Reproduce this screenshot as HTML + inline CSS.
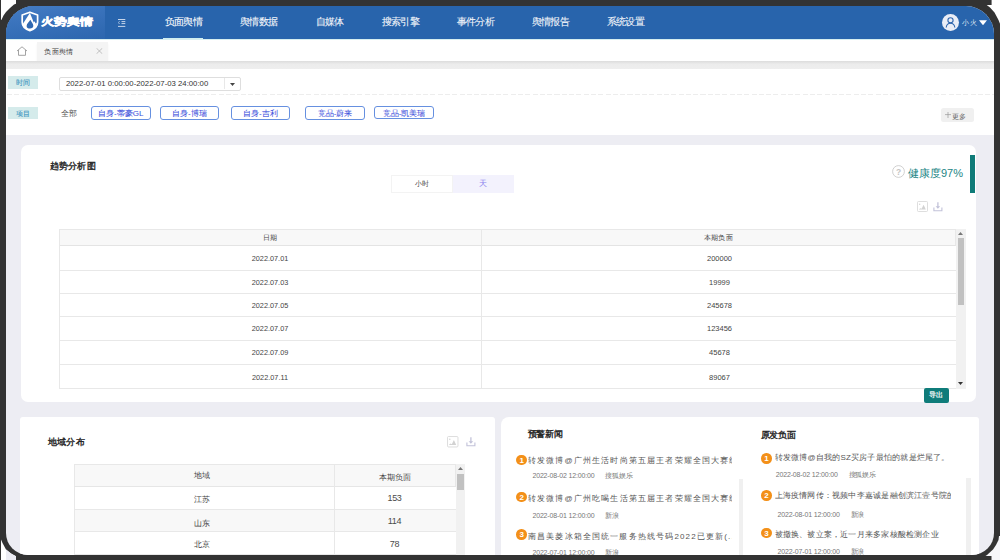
<!DOCTYPE html>
<html><head><meta charset="utf-8">
<style>
*{box-sizing:border-box;margin:0;padding:0}
html,body{width:1000px;height:560px;overflow:hidden;background:#333}
body{position:relative;font-family:"Liberation Sans",sans-serif;color:#333}
.a{position:absolute;white-space:nowrap}
#app{position:absolute;left:6px;top:6px;width:988px;height:549px;border-radius:28px 28px 22px 22px;overflow:hidden;background:#ededf3}
#w{position:absolute;left:-6px;top:-6px;width:1000px;height:560px}
#hdr{position:absolute;left:0;top:0;width:1000px;height:39px;background:#2864ac}
#logo{position:absolute;left:0;top:0;width:105px;height:39px;background:linear-gradient(170deg,#4a81c7 0%,#3a73bc 45%,#2c66ae 100%)}
.nav{position:absolute;top:15.5px;font-size:10px;line-height:12px;letter-spacing:-0.65px;color:#f2f5fa;-webkit-text-stroke:0.1px #f2f5fa}
#tabs{position:absolute;left:0;top:39px;width:1000px;height:22px;background:#fff;border-top:1px solid #d6eef0}
#band{position:absolute;left:0;top:61px;width:1000px;height:8px;background:linear-gradient(#dcdcdc,#ececec 40%,#eeeeee)}
#fpanel{position:absolute;left:0;top:69px;width:1000px;height:66px;background:#fff}
.card{position:absolute;background:#fff}
.lbl{position:absolute;left:7.5px;width:30.5px;height:12.5px;background:#d5ebeb;color:#3b95c0;font-size:7px;line-height:13px;text-align:center;letter-spacing:0.2px;-webkit-text-stroke:0.1px #3b95c0}
.chip{position:absolute;top:106px;height:13.5px;border:1px solid #6690e0;border-radius:3px;color:#3d4fdc;font-size:8px;line-height:14px;text-align:center;-webkit-text-stroke:0.05px #3d4fdc}
.tbl{position:absolute;border:1px solid #e6e6e6;background:#fff}
.row{position:absolute;left:0;border-bottom:1px solid #e6e6e6}
.cell{position:absolute;top:0;text-align:center;font-size:7.5px;color:#333}
.ttl{font-size:9px;font-weight:normal;color:#222;line-height:12px;letter-spacing:0.3px;-webkit-text-stroke:0.35px #222}
.num{position:absolute;width:10.5px;height:10.5px;border-radius:50%;background:#f39019;color:#fff;font-size:8px;line-height:11px;text-align:center;font-weight:bold}
.nt{font-size:9px;color:#555;letter-spacing:0.15px;line-height:11px;overflow:hidden}
.meta{font-size:7px;color:#777;line-height:8px;letter-spacing:-0.15px}
</style></head><body>
<div id="app"><div id="w">
  <div id="hdr">
    <div id="logo"></div>
    <svg class="a" style="left:18.5px;top:10.3px" width="22" height="23" viewBox="0 0 22 23">
      <path d="M10.9 2.2 L18.6 5 L18.6 12.2 C18.6 16.3 15.2 19.2 10.9 20.6 C6.6 19.2 3.2 16.3 3.2 12.2 L3.2 5 Z" fill="none" stroke="#fff" stroke-width="1.7" stroke-linejoin="round"/>
      <path d="M10.9 3 L3.6 14.2 L3.9 16 L6.3 18.6 L10.9 20.2 L15.5 18.6 L17.6 16.2 L17.9 12.6 L16.6 13.6 L15.6 11.2 L14.8 12.4 Z" fill="#fff"/>
      <path d="M11.3 9.8 C12.3 11.8 14.3 13.6 14.3 15.8 C14.3 17.5 13 18.6 11 18.6 C9 18.6 7.6 17.6 7.6 15.9 C7.6 13.6 10.3 12 11.3 9.8 Z" fill="#3069b2"/>
    </svg>
    <div class="a" style="left:40.5px;top:16.3px;font-size:9.8px;line-height:11px;font-weight:bold;-webkit-text-stroke:0.6px #fff;color:#fff;transform:scaleX(1.3);transform-origin:0 0">火势舆情</div>
    <svg class="a" style="left:118px;top:19px" width="8" height="8" viewBox="0 0 8 8"><path d="M0 0.5H7.3M3.5 2.6H7.3M3.5 4.6H7.3M0 7.4H7.3" stroke="#e3eaf5" stroke-width="0.85" fill="none"/><path d="M1.6 2.2L0.3 3.6L1.6 5" stroke="#e3eaf5" stroke-width="0.7" fill="none"/></svg>
    <div class="nav" style="left:164.5px;color:#fff">负面舆情</div>
    <div class="a" style="left:163px;top:37.5px;width:40px;height:1.5px;background:#cfeef0"></div>
    <div class="nav" style="left:240px">舆情数据</div>
    <div class="nav" style="left:315.5px">自媒体</div>
    <div class="nav" style="left:381.5px">搜索引擎</div>
    <div class="nav" style="left:456.5px">事件分析</div>
    <div class="nav" style="left:531.5px">舆情报告</div>
    <div class="nav" style="left:606.5px">系统设置</div>
    <div class="a" style="left:941.5px;top:14px;width:17px;height:17px;border-radius:50%;background:#e9edf6"></div>
    <svg class="a" style="left:941.5px;top:14px" width="17" height="17" viewBox="0 0 17 17"><circle cx="8.5" cy="6.3" r="2.6" fill="none" stroke="#2f66ad" stroke-width="1.1"/><path d="M4.2 13.5 C4.5 10.5 6.3 9.3 8.5 9.3 C10.7 9.3 12.5 10.5 12.8 13.5" fill="none" stroke="#2f66ad" stroke-width="1.1"/></svg>
    <div class="a" style="left:962.3px;top:18px;font-size:7px;line-height:9px;letter-spacing:0.5px;color:#dfe6f2">小火</div>
    <svg class="a" style="left:979px;top:20px" width="8" height="6" viewBox="0 0 8 6"><path d="M0 0.3H8L4 5.3Z" fill="#fff"/></svg>
  </div>
  <div id="tabs">
    <svg class="a" style="left:15.5px;top:6px" width="12" height="10" viewBox="0 0 12 10"><path d="M1 5 L6 0.8 L11 5 M2.5 4 V9.3 H9.5 V4" fill="none" stroke="#999" stroke-width="0.9"/></svg>
    <div class="a" style="left:37px;top:1.5px;width:71px;height:20.5px;background:#f4f4f4;box-shadow:0 1.5px 2px rgba(0,0,0,0.06)"></div>
    <div class="a" style="left:44.2px;top:6.5px;font-size:7px;line-height:10px;letter-spacing:0.4px;color:#444">负面舆情</div>
    <svg class="a" style="left:96px;top:8px" width="7" height="6" viewBox="0 0 7 6"><path d="M0.5 0.2L6.3 5.8M6.3 0.2L0.5 5.8" stroke="#aaa" stroke-width="0.7"/></svg>
  </div>
  <div id="band"></div>
  <div id="fpanel"></div>
  <div class="lbl" style="top:76px">时间</div>
  <div class="a" style="left:59px;top:76.5px;width:182px;height:14px;border:1px solid #dedede;border-radius:2px;background:#fff"></div>
  <div class="a" style="left:66px;top:79px;font-size:7.75px;line-height:9px;color:#333">2022-07-01 0:00:00-2022-07-03 24:00:00</div>
  <div class="a" style="left:223.5px;top:78px;width:1px;height:11px;background:#e8e8e8"></div>
  <svg class="a" style="left:229.5px;top:82.5px" width="5" height="3" viewBox="0 0 5 3"><path d="M0 0H5L2.5 3Z" fill="#444"/></svg>
  <div class="a" style="left:7px;top:93.5px;width:987px;height:1px;background:repeating-linear-gradient(90deg,#ededed 0 5px,transparent 5px 7.3px)"></div>
  <div class="lbl" style="top:106.8px">项目</div>
  <div class="a" style="left:61px;top:108.5px;font-size:8px;line-height:10px;color:#555">全部</div>
  <div class="chip" style="left:91px;width:59.5px">自身-蒂豪GL</div>
  <div class="chip" style="left:159.5px;width:59.5px">自身-博瑞</div>
  <div class="chip" style="left:230.5px;width:59.5px">自身-吉利</div>
  <div class="chip" style="left:305px;width:60px">竞品-蔚来</div>
  <div class="chip" style="left:374px;top:105.5px;width:60px">竞品-凯美瑞</div>
  <div class="a" style="left:941px;top:108px;width:33px;height:14px;border-radius:2.5px;background:#f0f0f0"></div><svg class="a" style="left:944.5px;top:112px" width="6" height="6" viewBox="0 0 6 6"><path d="M3 0V6M0 2.6H6" stroke="#999" stroke-width="0.7"/></svg><div class="a" style="left:951.5px;top:111.5px;font-size:7px;line-height:9px;color:#666">更多</div>

  <!-- trend card -->
  <div class="card" style="left:21px;top:145px;width:955px;height:257px;border-radius:7px"></div>
  <div class="a ttl" style="left:49.5px;top:159.6px">趋势分析图</div>
  <div class="a" style="left:391px;top:175px;width:61.5px;height:17.5px;border:1px solid #f3f3f3;background:#fff;font-size:7px;line-height:16px;text-align:center;color:#444">小时</div>
  <div class="a" style="left:452.5px;top:175px;width:61px;height:17.5px;background:#f3f2fd;font-size:8px;line-height:17px;text-align:center;color:#8b84ee">天</div>
  <svg class="a" style="left:891.5px;top:165px" width="13" height="13" viewBox="0 0 13 13"><circle cx="6.5" cy="6.5" r="5.9" fill="none" stroke="#c4c4c4" stroke-width="0.8"/><text x="6.5" y="9.6" font-size="8.5" font-weight="bold" text-anchor="middle" fill="#c4c4c4" font-family="Liberation Sans">?</text></svg>
  <div class="a" style="left:908px;top:165.8px;font-size:11px;line-height:15px;color:#1b8585">健康度97%</div>
  <div class="a" style="left:970px;top:155px;width:5px;height:38px;background:#0f7b78"></div>
  <svg class="a" style="left:917px;top:201px" width="11" height="11" viewBox="0 0 11 11"><rect x="0.5" y="0.5" width="10" height="10" rx="1" fill="#fff" stroke="#d6d6d6" stroke-width="0.8"/><path d="M1.8 8.6 L3.2 7.2 L4.6 7.8 L6.6 3.8 L8.8 8.6Z" fill="#d2d2d2"/><circle cx="2.7" cy="3.2" r="0.7" fill="#d2d2d2"/></svg>
  <svg class="a" style="left:932.5px;top:202.3px" width="10" height="10" viewBox="0 0 10 10"><path d="M4.9 0.3V5" stroke="#c2c2d9" stroke-width="1.3"/><path d="M2.6 4.3H7.2L4.9 6.8Z" fill="#c2c2d9"/><path d="M0.9 5.5V8.7H8.9V5.5" fill="none" stroke="#c2c2d9" stroke-width="1.1"/></svg>

  <div class="a" style="left:59px;top:229px;width:907px;height:160px;overflow:hidden;background:#fff">
<div class="a" style="left:0;top:0;width:897px;height:16.5px;background:#f8f8f8;border:1px solid #e8e8e8;border-bottom:1px solid #e4e4e4"></div>
<div class="a" style="left:422px;top:0;width:1px;height:160px;background:#e8e8e8"></div>
<div class="a" style="left:0;top:0;width:1px;height:160px;background:#e8e8e8"></div>
<div class="a cell" style="left:0;top:4px;width:422px;font-size:7px;line-height:9px;color:#444">日期</div>
<div class="a cell" style="left:422px;top:4px;width:475px;font-size:7px;line-height:9px;letter-spacing:0.3px;color:#444">本期负面</div>
<div class="a" style="left:0;top:40.5px;width:897px;height:1px;background:#e8e8e8"></div>
<div class="a cell" style="left:0;top:24.5px;width:422px;font-size:7.3px;line-height:9px;color:#444">2022.07.01</div>
<div class="a cell" style="left:423px;top:24.5px;width:475px;font-size:7.5px;line-height:9px;color:#444">200000</div>
<div class="a" style="left:0;top:64.0px;width:897px;height:1px;background:#e8e8e8"></div>
<div class="a cell" style="left:0;top:48.8px;width:422px;font-size:7.3px;line-height:9px;color:#444">2022.07.03</div>
<div class="a cell" style="left:423px;top:48.8px;width:475px;font-size:7.5px;line-height:9px;color:#444">19999</div>
<div class="a" style="left:0;top:87.0px;width:897px;height:1px;background:#e8e8e8"></div>
<div class="a cell" style="left:0;top:72.0px;width:422px;font-size:7.3px;line-height:9px;color:#444">2022.07.05</div>
<div class="a cell" style="left:423px;top:72.0px;width:475px;font-size:7.5px;line-height:9px;color:#444">245678</div>
<div class="a" style="left:0;top:110.5px;width:897px;height:1px;background:#e8e8e8"></div>
<div class="a cell" style="left:0;top:95.2px;width:422px;font-size:7.3px;line-height:9px;color:#444">2022.07.07</div>
<div class="a cell" style="left:423px;top:95.2px;width:475px;font-size:7.5px;line-height:9px;color:#444">123456</div>
<div class="a" style="left:0;top:135.0px;width:897px;height:1px;background:#e8e8e8"></div>
<div class="a cell" style="left:0;top:119.2px;width:422px;font-size:7.3px;line-height:9px;color:#444">2022.07.09</div>
<div class="a cell" style="left:423px;top:119.2px;width:475px;font-size:7.5px;line-height:9px;color:#444">45678</div>
<div class="a" style="left:0;top:159.0px;width:897px;height:1px;background:#e8e8e8"></div>
<div class="a cell" style="left:0;top:143.5px;width:422px;font-size:7.3px;line-height:9px;color:#444">2022.07.11</div>
<div class="a cell" style="left:423px;top:143.5px;width:475px;font-size:7.5px;line-height:9px;color:#444">89067</div>
<div class="a" style="left:897px;top:0;width:9.5px;height:160px;background:#f1f1f1"></div>
<div class="a" style="left:898.5px;top:9px;width:6.5px;height:67px;background:#c1c1c1"></div>
<svg class="a" style="left:899px;top:3px" width="5" height="3" viewBox="0 0 5 3"><path d="M0 3H5L2.5 0Z" fill="#777"/></svg>
<svg class="a" style="left:899px;top:153px" width="5" height="3" viewBox="0 0 5 3"><path d="M0 0H5L2.5 3Z" fill="#333"/></svg>
</div>
  <div class="a" style="left:923.5px;top:388px;width:25px;height:14.5px;border-radius:2px;background:#0f7c7a;color:#fff;font-size:7px;line-height:14.5px;text-align:center;-webkit-text-stroke:0.2px #fff">导出</div>

  <!-- region card -->
  <div class="card" style="left:20px;top:417px;width:475px;height:150px;border-radius:3px"></div>
  <div class="a ttl" style="left:47.9px;top:435.5px">地域分布</div>
  <svg class="a" style="left:447px;top:436px" width="11.5" height="11.5" viewBox="0 0 11 11"><rect x="0.5" y="0.5" width="10" height="10" rx="1" fill="#fff" stroke="#d6d6d6" stroke-width="0.8"/><path d="M1.8 8.6 L3.2 7.2 L4.6 7.8 L6.6 3.8 L8.8 8.6Z" fill="#d2d2d2"/><circle cx="2.7" cy="3.2" r="0.7" fill="#d2d2d2"/></svg>
  <svg class="a" style="left:466.3px;top:437.3px" width="10" height="10" viewBox="0 0 10 10"><path d="M4.9 0.3V5" stroke="#c2c2d9" stroke-width="1.3"/><path d="M2.6 4.3H7.2L4.9 6.8Z" fill="#c2c2d9"/><path d="M0.9 5.5V8.7H8.9V5.5" fill="none" stroke="#c2c2d9" stroke-width="1.1"/></svg>
  <div class="a" style="left:73.5px;top:464px;width:392px;height:92px;overflow:hidden;background:#fff">
<div class="a" style="left:0;top:0;width:382px;height:23px;background:#f8f8f8;border:1px solid #e8e8e8"></div>
<div class="a" style="left:0;top:22.4px;width:382px;height:23.6px;background:#fff;border-bottom:1px solid #e8e8e8"></div>
<div class="a cell" style="left:0;top:30.7px;width:256px;font-size:8px;line-height:10px;color:#444">江苏</div>
<div class="a cell" style="left:260px;top:28.4px;width:122px;font-size:9px;line-height:12px;letter-spacing:-0.3px;color:#4a4a4a">153</div>
<div class="a" style="left:0;top:46.0px;width:382px;height:22.3px;background:#f8f8f8;border-bottom:1px solid #e8e8e8"></div>
<div class="a cell" style="left:0;top:55.1px;width:256px;font-size:8px;line-height:10px;color:#444">山东</div>
<div class="a cell" style="left:260px;top:51.0px;width:122px;font-size:9px;line-height:12px;letter-spacing:-0.3px;color:#4a4a4a">114</div>
<div class="a" style="left:0;top:68.3px;width:382px;height:23.0px;background:#fff;border-bottom:1px solid #e8e8e8"></div>
<div class="a cell" style="left:0;top:76.3px;width:256px;font-size:8px;line-height:10px;color:#444">北京</div>
<div class="a cell" style="left:260px;top:73.5px;width:122px;font-size:9px;line-height:12px;letter-spacing:-0.3px;color:#4a4a4a">78</div>
<div class="a" style="left:0;top:0;width:1px;height:92px;background:#e8e8e8"></div>
<div class="a" style="left:0;top:22px;width:382px;height:1px;background:#e6e6e6"></div>
<div class="a" style="left:260px;top:0;width:1px;height:92px;background:#e8e8e8"></div>
<div class="a cell" style="left:0;top:6.5px;width:257px;font-size:8px;line-height:10px;color:#444">地域</div>
<div class="a cell" style="left:260px;top:8.5px;width:122px;font-size:8px;line-height:10px;color:#444">本期负面</div>
<div class="a" style="left:382px;top:0;width:9.5px;height:92px;background:#f1f1f1"></div>
<div class="a" style="left:383.5px;top:9.5px;width:6.5px;height:16px;background:#c1c1c1"></div>
<svg class="a" style="left:384px;top:3px" width="5" height="3" viewBox="0 0 5 3"><path d="M0 3H5L2.5 0Z" fill="#777"/></svg>
</div>

  <!-- news card -->
  <div class="card" style="left:501px;top:417px;width:478px;height:150px;border-radius:8px 3px 0 0"></div>
  <div class="a ttl" style="left:527.7px;top:427.6px;font-size:8.7px;letter-spacing:-0.2px">预警新闻</div>
<div class="a ttl" style="left:760.5px;top:428.6px;font-size:8.7px;letter-spacing:-0.2px">原发负面</div>
<div class="num" style="left:516.4px;top:454.8px">1</div>
<div class="a nt" style="left:528px;top:454.5px;width:203.5px;font-size:8px;letter-spacing:1.15px">转发微博@广州生活时尚第五届王者荣耀全国大赛组委会</div>
<div class="a meta" style="left:532.4px;top:472.4px">2022-08-02 12:00:00</div>
<div class="a meta" style="left:605.2px;top:472.4px">搜狐娱乐</div>
<div class="num" style="left:516.4px;top:491.9px">2</div>
<div class="a nt" style="left:528px;top:492.5px;width:203.5px;font-size:8px;letter-spacing:1.15px">转发微博@广州吃喝生活第五届王者荣耀全国大赛组委会</div>
<div class="a meta" style="left:532.4px;top:512.0px">2022-08-01 12:00:00</div>
<div class="a meta" style="left:605.2px;top:512.0px">新浪</div>
<div class="num" style="left:516.4px;top:529.3px">3</div>
<div class="a nt" style="left:528px;top:530.9px;width:203.5px;font-size:8px;letter-spacing:1.15px">南昌美菱冰箱全国统一服务热线号码2022已更新(...</div>
<div class="a meta" style="left:532.4px;top:549.3px">2022-07-01 12:00:00</div>
<div class="a meta" style="left:605.2px;top:549.3px">新浪</div>
<div class="a" style="left:738.6px;top:479px;width:4.5px;height:80px;background:#f0f0f0"></div>
<div class="num" style="left:761.2px;top:453.2px">1</div>
<div class="a nt" style="left:774.5px;top:452.4px;width:176.2px;font-size:8px;letter-spacing:0.22px">转发微博@自我的SZ买房子最怕的就是烂尾了。</div>
<div class="a meta" style="left:775.7px;top:470.9px">2022-08-02 12:00:00</div>
<div class="a meta" style="left:848.5px;top:470.9px">搜狐娱乐</div>
<div class="num" style="left:761.2px;top:490.1px">2</div>
<div class="a nt" style="left:774.5px;top:489.5px;width:176.2px;font-size:8px;letter-spacing:0.22px">上海疫情网传：视频中李嘉诚是融创滨江壹号院的业主</div>
<div class="a meta" style="left:777.6px;top:511.3px">2022-08-01 12:00:00</div>
<div class="a meta" style="left:850.5px;top:511.3px">新浪</div>
<div class="num" style="left:761.2px;top:527.5px">3</div>
<div class="a nt" style="left:774.5px;top:529.0px;width:176.2px;font-size:8px;letter-spacing:0.22px">被撤换、被立案，近一月来多家核酸检测企业</div>
<div class="a meta" style="left:777.6px;top:548.0px">2022-07-01 12:00:00</div>
<div class="a meta" style="left:850.5px;top:548.0px">新浪</div>
<div class="a" style="left:966px;top:478.4px;width:5px;height:80px;background:#f0f0f0"></div>
</div></div>
<svg class="a" style="left:0;top:0" width="1000" height="560" viewBox="0 0 1000 560">
  <path d="M1 0 H16 V3.7 L14 4.6 L10 8 L6 12 L3.5 15.6 L1.5 19.7 L1 20 Z" fill="#fff"/>
  <path d="M991.6 0 H1000 V23.8 L998.5 20 L994.5 12.5 L990 7.5 L986.7 5 H991.6 Z" fill="#fff"/>
  <path d="M1 539.6 L2.5 543 L6 549.6 L11 553.6 L16 556.2 V560 H1 Z" fill="#fff"/>
  <path d="M6 549.6 L11 553.6 L16 556.2 V560 H6 Z" fill="#ececf3"/>
  <path d="M999 535.9 L998.5 540 L996 545 L993 549.5 L987 555 L985.5 556 H991.5 V560 H1000 V535.9 Z" fill="#f6f6f9"/>
</svg>
</body></html>
